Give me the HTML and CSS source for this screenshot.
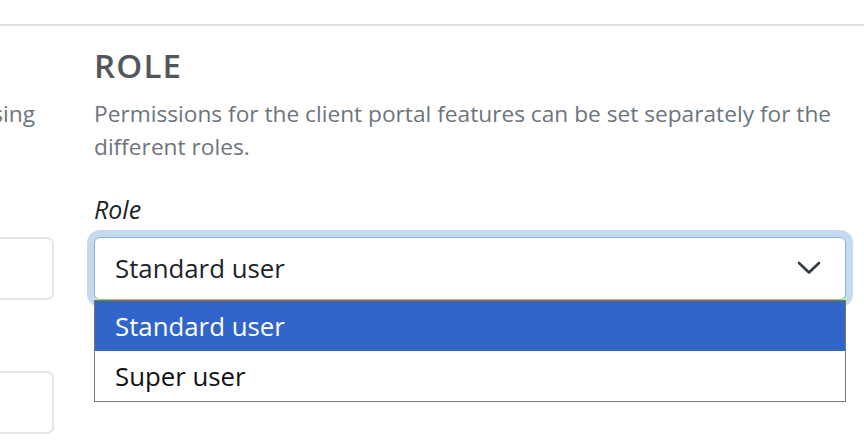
FILE: index.html
```html
<!DOCTYPE html>
<html lang="en">
<head>
<meta charset="utf-8">
<title>Role</title>
<link rel="stylesheet" href="styles.css">
</head>
<body>
<div class="topbar"></div>
<div class="main">
  <div class="left">
    <p class="left-text">Access to the client portal is managed using</p>
    <div class="left-input"></div>
    <div class="left-input second"></div>
  </div>
  <div class="right">
    <h2 class="heading">ROLE</h2>
    <p class="desc">Permissions for the client portal features can be set separately for the different roles.</p>
    <label class="label">Role</label>
    <div class="select-wrap">
      <div class="select">
        <span class="select-value">Standard user</span>
        <svg class="chevron" width="24" height="14" viewBox="0 0 24 14"><path d="M2 2 L12 11.5 L22 2" fill="none" stroke="#343a40" stroke-width="2.6" stroke-linecap="round" stroke-linejoin="round"/></svg>
      </div>
      <ul class="options">
        <li class="option selected">Standard user</li>
        <li class="option">Super user</li>
      </ul>
    </div>
  </div>
</div>
</body>
</html>
```
FILE: styles.css
```css
* { box-sizing: border-box; }
html, body { margin: 0; padding: 0; background: #fff; }
body {
  font-family: "Open Sans", "Noto Sans", sans-serif;
  color: #212529;
  overflow: hidden;
  height: 440px;
}
.topbar {
  height: 26px;
  border-bottom: 2px solid #dee2e6;
}
.main {
  display: flex;
  gap: 40px;
  padding-right: 18px;
}
.left {
  width: 54px;
  flex-shrink: 0;
  overflow: hidden;
  display: flex;
  flex-direction: column;
  align-items: flex-end;
}
.left-text {
  flex-shrink: 0;
  width: 500px;
  margin: 71.4px 0 0;
  padding-right: 19px;
  text-align: right;
  white-space: nowrap;
  font-size: 22.7px;
  line-height: 33px;
  color: #6c757d;
}
.left-input {
  flex-shrink: 0;
  width: 300px;
  height: 63px;
  margin-top: 106.6px;
  border: 2px solid #e3e6ea;
  border-radius: 7px;
}
.left-input.second {
  margin-top: 71px;
}
.right {
  flex: 1;
  min-width: 0;
}
.heading {
  margin: 20.4px 0 11px;
  font-size: 33px;
  line-height: 39.6px;
  font-weight: 600;
  letter-spacing: 1.2px;
  color: #53575c;
}
.desc {
  margin: 0;
  font-size: 22.7px;
  line-height: 33px;
  color: #6c757d;
}
.label {
  display: block;
  margin-top: 30.4px;
  margin-bottom: 10.2px;
  font-size: 25px;
  line-height: 33px;
  font-style: italic;
  color: #212529;
}
.select-wrap {
  position: relative;
}
.select {
  height: 63px;
  border: 1px solid #8db5dc;
  border-radius: 6px;
  box-shadow: 0 0 0 7px #c4dbef;
  display: flex;
  align-items: center;
  justify-content: space-between;
  padding: 0 24px 0 20px;
  background: #fff;
}
.select-value {
  font-size: 25.8px;
  color: #212529;
}
.chevron {
  display: block;
}
.options {
  position: absolute;
  top: 100%;
  left: 0;
  right: 0;
  margin: 0;
  padding: 0;
  list-style: none;
  border: 1px solid #767676;
  background: #fff;
}
.option {
  height: 50px;
  line-height: 50px;
  padding-left: 20px;
  font-size: 25.8px;
  color: #111;
}
.option.selected {
  background: #3165c9;
  color: #fff;
}
```
